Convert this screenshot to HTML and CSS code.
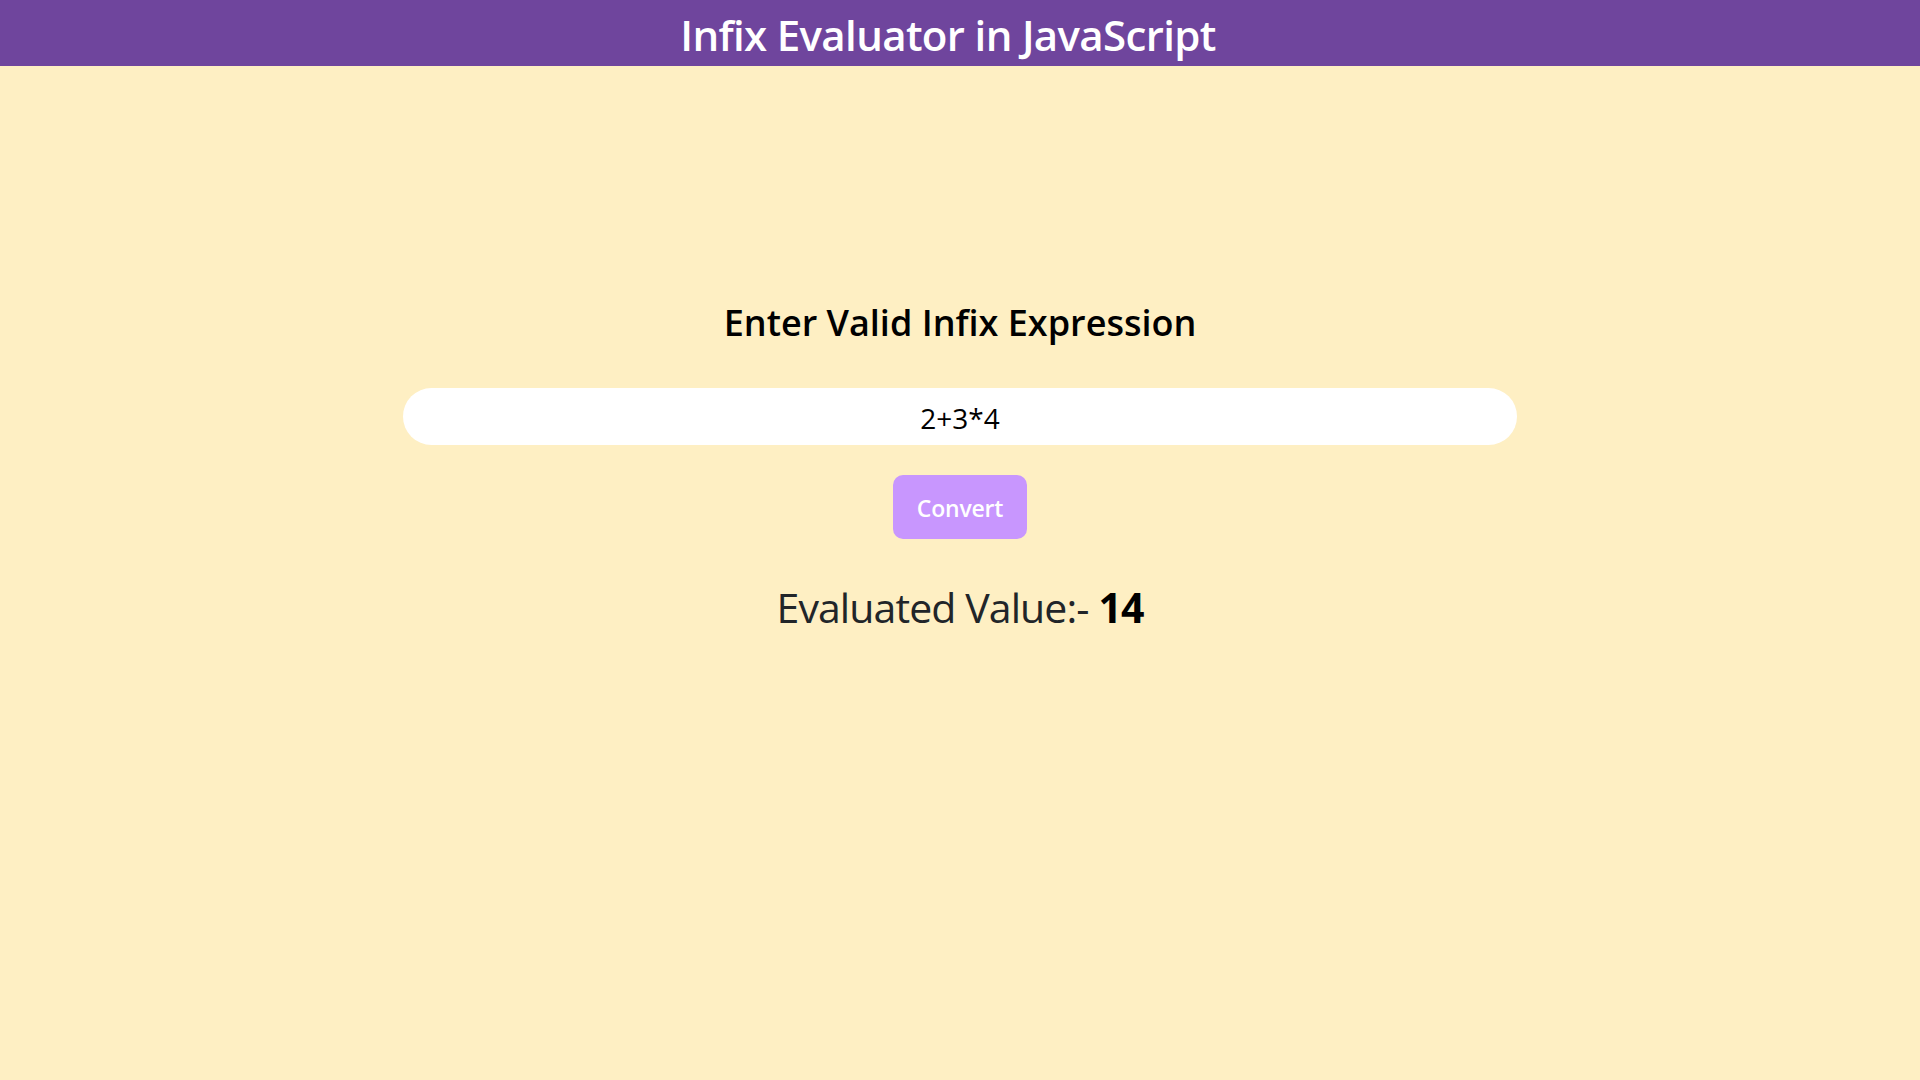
FILE: index.html
```html
<!DOCTYPE html>
<html lang="en">
<head>
<meta charset="utf-8">
<title>Infix Evaluator in JavaScript</title>
<link rel="stylesheet" href="styles.css">
</head>
<body>
<header class="topbar">
  <h1 class="topbar-title">Infix Evaluator in JavaScript</h1>
</header>
<main class="panel">
  <h2 class="panel-heading">Enter Valid Infix Expression</h2>
  <input class="expr-input" type="text" value="2+3*4">
  <button class="convert-btn" type="button">Convert</button>
  <p class="result">Evaluated Value:- <strong class="result-value">14</strong></p>
</main>
</body>
</html>
```
FILE: styles.css
```css
html, body {
  margin: 0;
  padding: 0;
}
body {
  background: #feefc3;
  font-family: "Open Sans", "Noto Sans", sans-serif;
  color: #212529;
  min-height: 1080px;
}
.topbar {
  background: #6f459d;
  height: 66px;
  display: flex;
  justify-content: center;
  padding-right: 24px;
}
.topbar-title {
  margin: 0;
  color: #ffffff;
  font-size: 42px;
  font-weight: 600;
  letter-spacing: -0.65px;
  line-height: 66px;
  padding-top: 2px;
}
.panel {
  display: flex;
  flex-direction: column;
  align-items: center;
  padding-top: 235px;
}
.panel-heading {
  margin: 0;
  color: #000000;
  font-size: 36px;
  font-weight: 600;
  line-height: 44px;
}
.expr-input {
  margin-top: 43px;
  box-sizing: border-box;
  width: 1114px;
  height: 57px;
  border: none;
  border-radius: 29px;
  background: #ffffff;
  text-align: center;
  font-family: "Open Sans", "Noto Sans", sans-serif;
  font-size: 28px;
  color: #000000;
  outline: none;
  padding: 2px 20px 0;
}
.convert-btn {
  margin-top: 30px;
  width: 134px;
  height: 64px;
  border: none;
  border-radius: 10px;
  background: #c896fe;
  color: #ffffff;
  font-family: "Open Sans", "Noto Sans", sans-serif;
  font-size: 23px;
  font-weight: 600;
  letter-spacing: -0.2px;
  padding: 2px 0 0;
}
.result {
  margin: 43px 0 0;
  font-size: 41px;
  line-height: 50px;
  letter-spacing: -0.9px;
  font-weight: 400;
  color: #212529;
}
.result-value {
  font-weight: 700;
  color: #000000;
}
```
